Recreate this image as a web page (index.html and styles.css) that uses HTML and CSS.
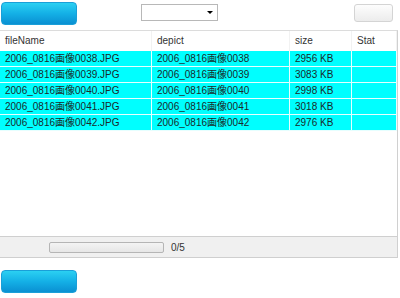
FILE: index.html
```html
<!DOCTYPE html>
<html>
<head>
<meta charset="utf-8">
<link rel="stylesheet" href="styles.css">
</head>
<body>
<div class="toolbar">
  <button class="btn-blue"></button>
  <div class="select"><span class="arrow"></span></div>
  <button class="btn-grey"></button>
</div>
<div class="grid">
  <div class="head">
    <div class="hc">fileName</div>
    <div class="hc">depict</div>
    <div class="hc">size</div>
    <div class="hc">Stat</div>
  </div>
  <div class="rows">
    <div class="row"><div class="c">2006_0816画像0038.JPG</div><div class="c">2006_0816画像0038</div><div class="c">2956 KB</div><div class="c"></div></div>
    <div class="row"><div class="c">2006_0816画像0039.JPG</div><div class="c">2006_0816画像0039</div><div class="c">3083 KB</div><div class="c"></div></div>
    <div class="row"><div class="c">2006_0816画像0040.JPG</div><div class="c">2006_0816画像0040</div><div class="c">2998 KB</div><div class="c"></div></div>
    <div class="row"><div class="c">2006_0816画像0041.JPG</div><div class="c">2006_0816画像0041</div><div class="c">3018 KB</div><div class="c"></div></div>
    <div class="row"><div class="c">2006_0816画像0042.JPG</div><div class="c">2006_0816画像0042</div><div class="c">2976 KB</div><div class="c"></div></div>
  </div>
  <div class="foot">
    <div class="progress"></div>
    <span class="count">0/5</span>
  </div>
</div>
<div class="bottom">
  <button class="btn-blue"></button>
</div>
</body>
</html>
```
FILE: styles.css
```css
html, body {
  margin: 0;
  padding: 0;
  background: #fff;
  font-family: "Liberation Sans", Arial, "Noto Sans CJK JP", sans-serif;
  font-size: 10px;
  color: #222;
}
.toolbar {
  height: 30px;
  display: flex;
  align-items: flex-start;
}
.btn-blue {
  display: block;
  width: 76px;
  height: 23px;
  margin: 2px 0 0 1px;
  padding: 0;
  border: 1px solid #1a9fd8;
  border-radius: 4px;
  background: linear-gradient(#2bd0f2, #14b0e6 50%, #0a90d2);
}
.select {
  width: 75px;
  height: 15px;
  margin: 4px 0 0 64px;
  border: 1px solid #b8b8b8;
  background: #fff;
  position: relative;
}
.arrow {
  position: absolute;
  left: 65px;
  top: 6px;
  width: 0;
  height: 0;
  border-left: 3px solid transparent;
  border-right: 3px solid transparent;
  border-top: 3px solid #000;
}
.btn-grey {
  display: block;
  width: 39px;
  height: 18px;
  margin: 4px 0 0 136px;
  padding: 0;
  border: 1px solid #d4d4d4;
  border-radius: 3px;
  background: linear-gradient(#fdfdfd, #ececec);
}
.grid {
  width: 397px;
  border-top: 1px solid #dcdcdc;
  border-right: 1px solid #d0d0d0;
}
.head, .row {
  display: grid;
  grid-template-columns: 152px 138px 62px 1fr;
}
.head {
  height: 20px;
  background: #fff;
}
.hc {
  padding-left: 5px;
  line-height: 20px;
  color: #333;
  border-right: 1px solid #f2f2f2;
}
.rows {
  height: 185px;
}
.row {
  height: 15px;
  border-bottom: 1px solid #e6ffff;
  background: #00ffff;
}
.c {
  padding-left: 5px;
  line-height: 15px;
  border-right: 1px solid #e6ffff;
  white-space: nowrap;
  overflow: hidden;
  color: #1a2a2a;
}
.foot {
  height: 20px;
  border-top: 1px solid #cfcfcf;
  border-bottom: 1px solid #cfcfcf;
  background: #f0f0f0;
  display: flex;
  align-items: center;
}
.progress {
  width: 113px;
  height: 9px;
  margin-left: 49px;
  border: 1px solid #b5b5b5;
  border-radius: 2px;
  background: linear-gradient(#f4f4f4, #e6e6e6);
}
.count {
  margin-left: 7px;
  color: #333;
}
.bottom {
  padding-top: 10px;
}
```
